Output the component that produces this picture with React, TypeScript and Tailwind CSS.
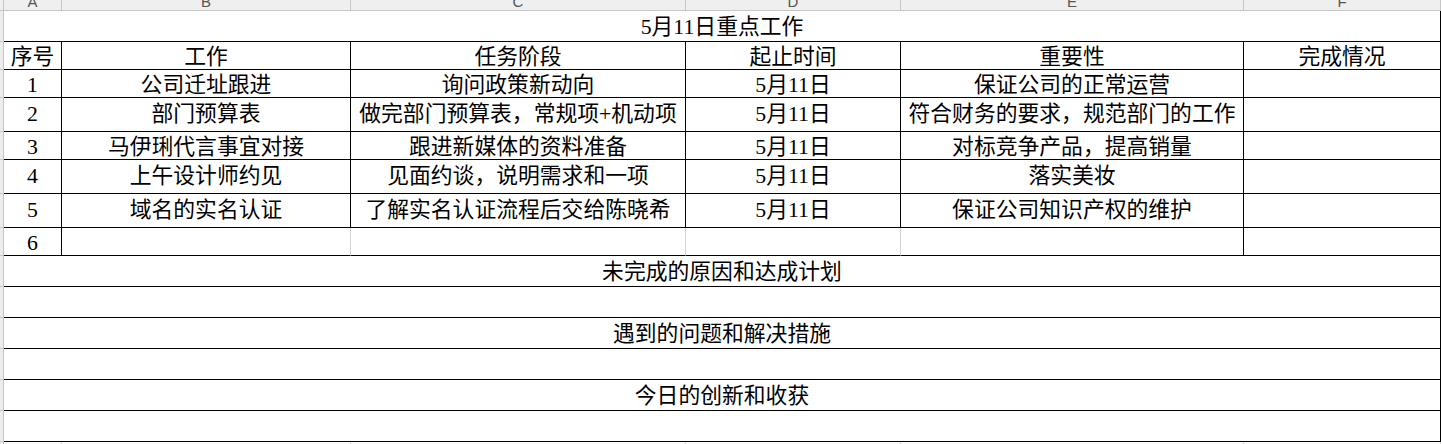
import React from "react"

const W = ["w-[58px]", "w-[289px]", "w-[335px]", "w-[215px]", "w-[343px]", "w-[197px]"]
const LETTERS = ["A", "B", "C", "D", "E", "F"]

const FONT = "font-['Liberation_Serif','Noto_Sans_CJK_SC',serif]"

type Row = { cells: string[]; h: string; grey?: boolean }

const rows: Row[] = [
  { cells: ["序号", "工作", "任务阶段", "起止时间", "重要性", "完成情况"], h: "h-[28px]" },
  { cells: ["1", "公司迁址跟进", "询问政策新动向", "5月11日", "保证公司的正常运营", ""], h: "h-[28px]" },
  { cells: ["2", "部门预算表", "做完部门预算表，常规项+机动项", "5月11日", "符合财务的要求，规范部门的工作", ""], h: "h-[34px]" },
  { cells: ["3", "马伊琍代言事宜对接", "跟进新媒体的资料准备", "5月11日", "对标竞争产品，提高销量", ""], h: "h-[28px]" },
  { cells: ["4", "上午设计师约见", "见面约谈，说明需求和一项", "5月11日", "落实美妆", ""], h: "h-[34px]" },
  { cells: ["5", "域名的实名认证", "了解实名认证流程后交给陈晓希", "5月11日", "保证公司知识产权的维护", ""], h: "h-[34px]" },
  { cells: ["6", "", "", "", "", ""], h: "h-[28px]", grey: true },
]

const wide = ["未完成的原因和达成计划", "", "遇到的问题和解决措施", "", "今日的创新和收获", ""]

function Strip({ h }: { h: string }) {
  return <div className={`${h} w-[4px] shrink-0 bg-[#ececec] border-r border-b border-[#c6c6c6]`} />
}

export default function App() {
  return (
    <div className={`w-[1441px] h-[444px] overflow-hidden bg-white text-black ${FONT} text-[21.8px]`}>
      {/* column header */}
      <div className="flex h-[11px] bg-[#efefef] border-b border-[#c6c6c6]">
        <div className="w-[4px] shrink-0 border-r border-[#c6c6c6]" />
        {LETTERS.map((l, i) => (
          <div
            key={l}
            className={`${W[i]} shrink-0 border-r border-[#c6c6c6] overflow-hidden flex justify-center font-['Liberation_Sans',sans-serif] text-[15px] leading-none text-[#555]`}
          >
            <span className="-mt-[6px]">{l}</span>
          </div>
        ))}
      </div>

      {/* title */}
      <div className="flex">
        <Strip h="h-[31px]" />
        <div className="h-[31px] w-[1437px] border-r border-b border-black flex items-center justify-center leading-none pt-[3px] whitespace-nowrap">
          5月11日重点工作
        </div>
      </div>

      {rows.map((r, ri) => (
        <div key={ri} className="flex">
          <Strip h={r.h} />
          {r.cells.map((c, ci) => {
            const greyRight = r.grey && ci >= 1 && ci <= 3
            return (
              <div
                key={ci}
                className={`${W[ci]} ${r.h} shrink-0 border-b border-black border-r ${greyRight ? "border-r-[#d4d4d4]" : ""} flex items-center justify-center leading-none whitespace-nowrap ${r.h === "h-[28px]" ? "pt-[4px]" : "pt-[1px]"}`}
              >
                {c}
              </div>
            )
          })}
        </div>
      ))}

      {wide.map((t, i) => (
        <div key={i} className="flex">
          <Strip h="h-[31px]" />
          <div className="h-[31px] w-[1437px] border-r border-b border-black flex items-center justify-center leading-none pt-[3px] whitespace-nowrap">
            {t}
          </div>
        </div>
      ))}

      <div className="flex h-[3px]">
        <div className="w-[4px] shrink-0 bg-[#ececec] border-r border-[#c6c6c6]" />
        {W.map((w, i) => (
          <div key={i} className={`${w} shrink-0 border-r border-[#d4d4d4]`} />
        ))}
      </div>
    </div>
  )
}
